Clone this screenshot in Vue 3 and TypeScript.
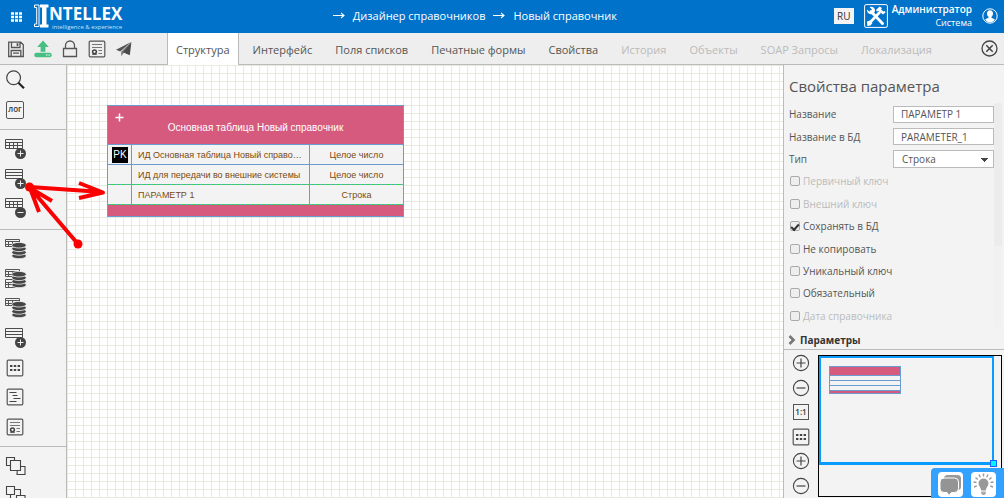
<script setup lang="ts">
import { ref } from 'vue'

interface Tab { title: string; disabled?: boolean }
interface Tool { icon: string; title: string }
interface Flag { id: string; label: string; checked: boolean; disabled?: boolean }

const crumbs = ['Дизайнер справочников', 'Новый справочник']

const actions: Tool[] = [
  { icon: 'save', title: 'Сохранить' },
  { icon: 'upload', title: 'Опубликовать' },
  { icon: 'lock', title: 'Заблокировать' },
  { icon: 'cert', title: 'Свойства' },
  { icon: 'plane', title: 'Отправить' },
]

const tabs: Tab[] = [
  { title: 'Структура' },
  { title: 'Интерфейс' },
  { title: 'Поля списков' },
  { title: 'Печатные формы' },
  { title: 'Свойства' },
  { title: 'История', disabled: true },
  { title: 'Объекты', disabled: true },
  { title: 'SOAP Запросы', disabled: true },
  { title: 'Локализация', disabled: true },
]
const activeTab = ref('Структура')

const tableTools: Tool[] = [
  { icon: 'table-add', title: 'Добавить таблицу' },
  { icon: 'row-add', title: 'Добавить параметр' },
  { icon: 'table-remove', title: 'Удалить' },
]
const dataTools: Tool[] = [
  { icon: 'db', title: 'Таблица БД' },
  { icon: 'db-double', title: 'Таблицы БД' },
  { icon: 'db', title: 'Представление БД' },
  { icon: 'row-add', title: 'Добавить строку' },
  { icon: 'dots', title: 'Сетка' },
  { icon: 'tree', title: 'Дерево' },
  { icon: 'cert', title: 'Сертификат' },
]
const orderTools: Tool[] = [
  { icon: 'front', title: 'На передний план' },
  { icon: 'back', title: 'На задний план' },
]
const isBoxed = (icon: string) => ['dots', 'tree', 'cert'].includes(icon)

const rows = [
  { pk: true, name: 'ИД Основная таблица Новый справо…', type: 'Целое число' },
  { pk: false, name: 'ИД для передачи во внешние системы', type: 'Целое число' },
  { pk: false, name: 'ПАРАМЕТР 1', type: 'Строка', selected: true },
]

const paramName = ref('ПАРАМЕТР 1')
const dbName = ref('PARAMETER_1')
const paramType = ref('Строка')

const flags = ref<Flag[]>([
  { id: 'primary', label: 'Первичный ключ', checked: false, disabled: true },
  { id: 'foreign', label: 'Внешний ключ', checked: false, disabled: true },
  { id: 'store', label: 'Сохранять в БД', checked: true },
  { id: 'nocopy', label: 'Не копировать', checked: false },
  { id: 'unique', label: 'Уникальный ключ', checked: false },
  { id: 'required', label: 'Обязательный', checked: false },
  { id: 'date', label: 'Дата справочника', checked: false, disabled: true },
])

const zoomTools: Tool[] = [
  { icon: 'plus', title: 'Увеличить' },
  { icon: 'minus', title: 'Уменьшить' },
  { icon: 'one', title: 'Масштаб 1:1' },
  { icon: 'dots', title: 'Сетка' },
  { icon: 'plus', title: 'Увеличить сетку' },
  { icon: 'minus', title: 'Уменьшить сетку' },
]
</script>

<template>
  <svg class="sprite" aria-hidden="true">
    <defs>
      <symbol id="i-save" viewBox="0 0 18 18">
        <path d="M1.700 2.200h12l2.600 2.600v11.700H1.700z M4.500 2.500v5h8.500v-5 M4.200 16v-5.500h9.600V16 M6 13.200h6" fill="none" stroke="#555" stroke-width="1.3" />
        <rect x="9.600" y="3.200" width="1.800" height="2.800" fill="#555" />
      </symbol>
      <symbol id="i-upload" viewBox="0 0 18 18">
        <path d="M9 .5l5.800 6.500h-3.400v4.800H6.600V7H3.200z" fill="#47bf83" />
        <rect x="0.3" y="12.800" width="17.400" height="4.400" rx="2" fill="#47bf83" />
        <circle cx="12.800" cy="15" r="0.7" fill="#fff" /><circle cx="15.200" cy="15" r="0.7" fill="#fff" />
      </symbol>
      <symbol id="i-lock" viewBox="0 0 18 18">
        <path d="M2.500 8.500h13v8h-13z M4.500 8.500V5.500a4.500 4.500 0 0 1 9 0v3" fill="none" stroke="#555" stroke-width="1.3" />
      </symbol>
      <symbol id="i-cert" viewBox="0 0 18 18">
        <rect x="1.200" y="1.200" width="15.600" height="15.600" rx="1" fill="none" stroke="#555" stroke-width="1.2" />
        <path d="M4 4.500h10M4 7.500h10M10.500 10.500h3.500M10.500 13.500h3.500" stroke="#777" stroke-width="1" />
        <circle cx="6.500" cy="11.800" r="1.900" fill="none" stroke="#444" stroke-width="1.5" />
        <path d="M4.200 14.400h4.600" stroke="#555" stroke-width="1" />
      </symbol>
      <symbol id="i-plane" viewBox="0 0 18 18">
        <path d="M16.200 2L1 9.800l4.200 1.600z" fill="#555" />
        <path d="M16.200 2L6.200 11.800v4.400l2.400-3.200z" fill="#777" />
        <path d="M16.400 2L8 12.200l6.800 3z" fill="#4a4a4a" />
      </symbol>
      <symbol id="i-search" viewBox="0 0 22 20">
        <circle cx="8.600" cy="7.800" r="6.900" fill="none" stroke="#444" stroke-width="1.2" />
        <path d="M13.400 12.800l5.600 5.400" stroke="#222" stroke-width="2.200" />
      </symbol>
      <symbol id="grid-table" viewBox="0 0 18 10">
        <path d="M.5 .5h17v9h-17z M.5 3.500h17M.5 6.500h17M4.500 3.500v6M8.500 3.500v6M12.500 3.500v6" fill="none" stroke="#4c4c4c" stroke-width="1" />
      </symbol>
      <symbol id="row-table" viewBox="0 0 18 10">
        <path d="M.5 .5h17v9h-17z M.5 3.500h17M.5 6.500h17" fill="none" stroke="#4c4c4c" stroke-width="1" />
      </symbol>
      <symbol id="stack" viewBox="0 0 15 17">
        <g fill="#454545" stroke="#f3f3f3" stroke-width=".8">
          <ellipse cx="7.500" cy="13.900" rx="7.300" ry="2.800" /><ellipse cx="7.500" cy="10.400" rx="7.300" ry="2.800" />
          <ellipse cx="7.500" cy="6.800" rx="7.300" ry="2.800" /><ellipse cx="7.500" cy="3.200" rx="7.300" ry="2.800" />
        </g>
      </symbol>
      <symbol id="i-table-add" viewBox="0 0 22 20">
        <use href="#grid-table" width="18" height="10" />
        <circle cx="15.500" cy="14.500" r="5.500" fill="#444" /><path d="M12.500 14.500h6M15.500 11.500v6" stroke="#eee" stroke-width="1" />
      </symbol>
      <symbol id="i-row-add" viewBox="0 0 22 20">
        <use href="#row-table" width="18" height="10" />
        <circle cx="15.500" cy="14.500" r="5.500" fill="#444" /><path d="M12.500 14.500h6M15.500 11.500v6" stroke="#eee" stroke-width="1" />
      </symbol>
      <symbol id="i-table-remove" viewBox="0 0 22 20">
        <use href="#grid-table" width="18" height="10" />
        <circle cx="15.500" cy="14.500" r="5.500" fill="#444" /><path d="M12.500 14.500h6" stroke="#eee" stroke-width="1" />
      </symbol>
      <symbol id="i-db" viewBox="0 0 22 20">
        <path d="M.5 .5h14v7h-14z M.5 2.500h14M.5 5.500h8M3.500 2.500v5M7.500 2.500v5" fill="none" stroke="#555" stroke-width="1" />
        <use href="#stack" x="6.500" y="3" width="15" height="17" />
      </symbol>
      <symbol id="i-db-double" viewBox="0 0 22 20">
        <path d="M.5 .5h14v7h-14z M.5 2.500h14M.5 5.500h8M3.500 2.500v5M7.500 2.500v5M.5 10.500h10v8H.5zM.5 13.500h8M.5 15.500h8M3.500 13.500v5" fill="none" stroke="#555" stroke-width="1" />
        <use href="#stack" x="6.500" y="2" width="15" height="17" />
      </symbol>
      <symbol id="i-dots" viewBox="0 0 18 18">
        <rect x="1.200" y="1.200" width="15.600" height="15.600" rx="1" fill="none" stroke="#555" stroke-width="1.2" />
        <path d="M4 7h2.400M7.800 7h2.400M11.600 7H14M4 11h2.400M7.800 11h2.400M11.600 11H14" stroke="#444" stroke-width="2.2" />
      </symbol>
      <symbol id="i-tree" viewBox="0 0 18 18">
        <rect x="1.200" y="1.200" width="15.600" height="15.600" rx="1" fill="none" stroke="#555" stroke-width="1.2" />
        <path d="M3.500 4.500h7M6.500 7.500h5M7.500 10.500h7M3.500 13.500h7" stroke="#444" stroke-width="1.1" />
      </symbol>
      <symbol id="i-front" viewBox="0 0 22 20">
        <path d="M1.500 1.500h8v8h-8z M12.500 10.500h7.500v8h-8z" fill="#f3f3f3" stroke="#444" stroke-width="1.1" />
        <path d="M5.500 4.500h10v10h-10z" fill="#f3f3f3" stroke="#444" stroke-width="1.1" />
      </symbol>
      <symbol id="i-back" viewBox="0 0 22 20">
        <path d="M5.500 4.500h10v10h-10z" fill="#f3f3f3" stroke="#444" stroke-width="1.1" />
        <path d="M1.500 1.500h8v8h-8z M11.500 10.500h8.500v8h-8.500z" fill="#f3f3f3" stroke="#444" stroke-width="1.1" />
      </symbol>
      <symbol id="i-plus" viewBox="0 0 18 18">
        <circle cx="9" cy="9" r="7.600" fill="none" stroke="#444" stroke-width="1.1" />
        <path d="M4.500 9h9M9 4.500v9" stroke="#444" stroke-width="1.2" />
      </symbol>
      <symbol id="i-minus" viewBox="0 0 18 18">
        <circle cx="9" cy="9" r="7.600" fill="none" stroke="#444" stroke-width="1.1" />
        <path d="M4.500 9h9" stroke="#444" stroke-width="1.2" />
      </symbol>
    </defs>
  </svg>

  <div class="app">
    <header class="header">
      <div class="brand">
        <button class="bare" aria-label="Меню">
          <svg width="11" height="10" viewBox="0 0 11 10">
            <path d="M0 1.500h3M4 1.500h3M8 1.500h3M0 5h3M4 5h3M8 5h3M0 8.500h3M4 8.500h3M8 8.500h3" stroke="#fff" stroke-width="2.600" />
          </svg>
        </button>
        <a class="logo" href="#">
          <svg width="15" height="24" viewBox="0 0 15 24">
            <path d="M.5 1h4.500v21.500H.5v-2.500h2.200V3.500H.5z" fill="none" stroke="#fff" stroke-width="1" />
            <path d="M6 .5h8.500v3h-2v17h2v3H6v-3h2v-17H6z" fill="#fff" />
          </svg>
          <span class="logo-text">
            <span class="logo-name">NTELLEX</span>
            <span class="logo-sub">intelligence &amp; experience</span>
          </span>
        </a>
      </div>
      <nav class="crumbs">
        <template v-for="c in crumbs" :key="c">
          <svg width="12" height="7" viewBox="0 0 12 7"><path d="M0 3.500h10.500M8 1l3 2.500L8 6" fill="none" stroke="#fff" stroke-width="1.1" /></svg>
          <a href="#">{{ c }}</a>
        </template>
      </nav>
      <div class="account">
        <button class="lang">RU</button>
        <button class="bare" aria-label="Настройки">
          <svg width="24" height="24" viewBox="0 0 24 24">
            <rect x=".6" y=".6" width="22.800" height="22.800" rx="1.500" fill="none" stroke="#fff" stroke-width="1" />
            <path d="M7 7.500L18.500 19.500" stroke="#fff" stroke-width="3" stroke-linecap="round" />
            <path d="M3 5.500l2.400 2.300 2-.4.500-2L5.600 3c2.200-.6 4.300.2 5.100 1.900.5 1.200.4 2.600-.4 3.700-1 1.400-3 2-4.600 1.300C3.800 9.200 2.700 7.500 3 5.500z" fill="#fff" />
            <path d="M4.500 20L16 8" stroke="#fff" stroke-width="2.600" />
            <path d="M12 6l3.500-3.500 2.500 1.500-1 1.500 2.500 2 1.500-.5.5 1.500-2.500 2-4.500-3.500-1.500.5z" fill="#fff" />
            <path d="M3 17.500l3-1 2.500 2.500-2 2.500-3.200.5z" fill="#fff" />
          </svg>
        </button>
        <div class="user"><b>Администратор</b><span>Система</span></div>
        <button class="bare" aria-label="Профиль">
          <svg width="16" height="16" viewBox="0 0 16 16">
            <circle cx="8" cy="8" r="7.200" fill="none" stroke="#fff" stroke-width="1" />
            <path d="M8 2.300c2 0 3 1.400 3 3.200 0 1.500-.7 2.600-1.500 3.300v1.300c1.500.4 2.700.8 3.300 1.600A6.500 6.500 0 0 1 8 14.500a6.500 6.500 0 0 1-4.800-2.800c.6-.8 1.800-1.200 3.300-1.600V8.800C5.700 8.100 5 7 5 5.500c0-1.800 1-3.200 3-3.200z" fill="#fff" />
          </svg>
        </button>
      </div>
    </header>

    <div class="toolbar">
      <div class="actions">
        <button v-for="a in actions" :key="a.icon" class="bare action" :aria-label="a.title">
          <svg width="18" height="18"><use :href="'#i-' + a.icon" /></svg>
        </button>
      </div>
      <div class="tabs" role="tablist">
        <button
          v-for="t in tabs" :key="t.title" class="tab" :class="{ active: t.title === activeTab }"
          role="tab" :aria-selected="t.title === activeTab" :disabled="t.disabled" @click="activeTab = t.title"
        >{{ t.title }}</button>
      </div>
      <button class="bare close" aria-label="Закрыть">
        <svg width="17" height="17" viewBox="0 0 17 17">
          <circle cx="8.500" cy="8.500" r="7.500" fill="none" stroke="#444" stroke-width="1.300" />
          <path d="M5.300 5.300l6.400 6.400M11.700 5.300l-6.400 6.400" stroke="#444" stroke-width="1.500" />
        </svg>
      </button>
    </div>

    <div class="body">
      <aside class="sidebar">
        <div class="group first">
          <button class="bare tool" aria-label="Поиск"><svg width="22" height="20"><use href="#i-search" /></svg></button>
          <button class="bare tool"><span class="log">лог</span></button>
        </div>
        <div class="group tables">
          <button v-for="t in tableTools" :key="t.title" class="bare tool" :aria-label="t.title">
            <svg width="22" height="20"><use :href="'#i-' + t.icon" /></svg>
          </button>
        </div>
        <div class="group data">
          <button v-for="t in dataTools" :key="t.title" class="bare tool" :aria-label="t.title">
            <svg :width="isBoxed(t.icon) ? 20 : 22" :height="isBoxed(t.icon) ? 18 : 20"><use :href="'#i-' + t.icon" /></svg>
          </button>
        </div>
        <div class="group order">
          <button v-for="t in orderTools" :key="t.title" class="bare tool" :aria-label="t.title">
            <svg width="22" height="20"><use :href="'#i-' + t.icon" /></svg>
          </button>
        </div>
      </aside>

      <main class="canvas">
        <table class="entity">
          <colgroup><col class="c-key" /><col /><col class="c-type" /></colgroup>
          <thead>
            <tr>
              <th colspan="3">
                <button class="bare add" aria-label="Добавить">
                  <svg width="9" height="9" viewBox="0 0 9 9"><path d="M4.500 .5v8M.5 4.500h8" stroke="#fff" stroke-width="1.500" /></svg>
                </button>
                <div class="entity-title">Основная таблица Новый справочник</div>
              </th>
            </tr>
          </thead>
          <tbody>
            <tr v-for="r in rows" :key="r.name" :class="{ selected: r.selected }">
              <td class="key"><span v-if="r.pk" class="pk">PK</span></td>
              <td class="name">{{ r.name }}</td>
              <td class="type">{{ r.type }}</td>
            </tr>
          </tbody>
          <tfoot><tr><td colspan="3"></td></tr></tfoot>
        </table>
      </main>

      <aside class="panel">
        <h2>Свойства параметра</h2>
        <div class="scroll">
          <form class="form" @submit.prevent>
            <div class="field"><label for="p-name">Название</label><input id="p-name" v-model="paramName" type="text" /></div>
            <div class="field"><label for="p-db">Название в БД</label><input id="p-db" v-model="dbName" type="text" /></div>
            <div class="field">
              <label for="p-type">Тип</label>
              <select id="p-type" v-model="paramType"><option>Строка</option><option>Целое число</option></select>
            </div>
            <div v-for="f in flags" :key="f.id" class="flag" :class="{ off: f.disabled }">
              <input :id="f.id" v-model="f.checked" type="checkbox" :disabled="f.disabled" />
              <label :for="f.id">{{ f.label }}</label>
            </div>
          </form>
          <div class="track"><div class="thumb"></div></div>
        </div>
        <button class="bare section">
          <svg width="8" height="10" viewBox="0 0 8 10"><path d="M1.500 1l4 4-4 4" fill="none" stroke="#777" stroke-width="2.600" /></svg>
          Параметры
        </button>
        <div class="overview">
          <div class="zooms">
            <button v-for="z in zoomTools" :key="z.title" class="bare zoom" :aria-label="z.title">
              <span v-if="z.icon === 'one'" class="one">1:1</span>
              <svg v-else width="18" height="18"><use :href="'#i-' + z.icon" /></svg>
            </button>
          </div>
          <div class="minimap">
            <div class="viewport">
              <div class="mini"><i></i><i></i><i></i></div>
              <div class="handle"></div>
            </div>
          </div>
        </div>
      </aside>
    </div>

    <svg class="arrows" width="120" height="260" viewBox="0 0 120 260" aria-hidden="true">
      <g fill="none" stroke="#fb0000" stroke-width="4" stroke-linejoin="round">
        <path d="M30 187L102 192M79 183L103 192.500L79 198" />
        <path d="M78 244L31 189M39 212L30 188L52 201" />
      </g>
      <circle cx="29.500" cy="187" r="4.500" fill="#fb0000" />
      <circle cx="78" cy="244" r="4.500" fill="#fb0000" />
    </svg>

    <div class="helpers">
      <button class="helper" aria-label="Сообщения">
        <svg width="25" height="25" viewBox="0 0 25 25">
          <rect x="6" y="3" width="17" height="15" rx="3.500" fill="#999" />
          <path d="M6 6h10.500a4 4 0 0 1 4 4v6.500a4 4 0 0 1-4 4h-3l-2.500 3-2-3H6a4 4 0 0 1-4-4V10a4 4 0 0 1 4-4z" fill="#949494" stroke="#fff" stroke-width="1" />
        </svg>
      </button>
      <button class="helper" aria-label="Подсказки">
        <svg width="25" height="25" viewBox="0 0 25 25">
          <path d="M12.500 6.500a5 5 0 0 1 5 5c0 2.500-2.500 4-2.700 7h-4.600c-.2-3-2.700-4.500-2.700-7a5 5 0 0 1 5-5z" fill="#999" />
          <path d="M10.200 19.500h4.600v2l-1.300 1.500h-2l-1.300-1.500z" fill="#aaa" />
          <path d="M12.500 1.500v3M8 2.500l1.300 2.700M17 2.500l-1.300 2.700M4.500 5.500l2.300 2M20.500 5.500l-2.300 2M2.500 10l3 .5M22.500 10l-3 .5M3 15l2.700-1M22 15l-2.700-1" stroke="#999" stroke-width="1.400" />
        </svg>
      </button>
    </div>
  </div>
</template>

<style>
html, body { margin: 0; }
</style>

<style scoped>
.sprite { position: absolute; width: 0; height: 0; }
.app {
  position: relative; display: flex; flex-direction: column; height: 100vh; overflow: hidden;
  font-family: "Open Sans", "Noto Sans", sans-serif; font-size: 10px; color: #555; background: #f3f3f3;
}
.app * { box-sizing: border-box; }
button, input, select { font: inherit; color: inherit; margin: 0; border-radius: 0; }
.bare { display: flex; align-items: center; padding: 0; border: 0; background: none; }
svg { display: block; flex: none; }

.header { display: flex; flex: none; height: 33px; background: #0072ca; color: #fff; }
.brand { display: flex; flex: none; align-items: center; gap: 12px; width: 130px; padding-left: 11px; }
.logo { display: flex; align-items: flex-start; color: #fff; text-decoration: none; }
.logo-text { display: flex; flex-direction: column; }
.logo-name { font-size: 17px; line-height: 20px; font-weight: 700; }
.logo-sub { font-size: 6px; line-height: 6px; padding-left: 3px; white-space: nowrap; color: #cfe3f5; }
.crumbs { flex: 1; display: flex; align-items: center; justify-content: center; gap: 8px; padding: 0 1px 2px 0; }
.crumbs a { color: #fff; font-size: 11px; text-decoration: none; white-space: nowrap; }
.account { display: flex; flex: none; align-items: center; gap: 10px; padding: 0 6px 2px 13px; }
.lang { width: 20px; height: 16px; padding: 0; border: 0; background: #f3f3f3; color: #333; font-size: 10px; line-height: 14px; }
.user { display: flex; flex-direction: column; text-align: right; font-size: 9px; line-height: 13px; margin-left: -6px; }
.user b { font-size: 10px; font-weight: 600; }

.toolbar { display: flex; flex: none; height: 32px; background: #eee; border-bottom: 1px solid #bbb; }
.actions { display: flex; flex: none; align-items: center; width: 167px; padding-left: 2px; }
.action { width: 27px; justify-content: center; }
.tabs { flex: 1; display: flex; gap: 5px; }
.tab {
  height: 32px; padding: 0 8px; border: 1px solid transparent; border-width: 0 1px; background: none;
  font-size: 11px; color: #555; white-space: nowrap;
}
.tab.active { background: #fff; border-color: #bbb; }
.tab:disabled { color: #bbb; }
.close { padding-right: 6px; }

.body { flex: 1; min-height: 0; display: flex; }
.sidebar { width: 67px; flex: none; border-right: 1px solid #bbb; overflow: hidden; }
.group { display: flex; flex-direction: column; border-bottom: 1px solid #bbb; padding: 4px 0; }
.first { height: 65px; padding-top: 0; }
.tables { height: 100px; padding-bottom: 6px; }
.data { height: 217px; }
.order { height: 68px; }
.tool { flex: 1; padding-left: 5px; }
.log {
  width: 18px; height: 18px; margin-left: 1px; border: 1px solid #555; border-radius: 2px;
  font-size: 8px; line-height: 14px; font-weight: 600; text-align: center; color: #333;
}

.canvas {
  position: relative; flex: 1; min-width: 0; overflow: hidden; background-color: #fff;
  background-image: linear-gradient(to right, #e9e9e1 1px, transparent 1px), linear-gradient(to bottom, #e9e9e1 1px, transparent 1px);
  background-size: 8px 8px;
}
.entity {
  position: absolute; left: 40px; top: 40px; width: 297px; table-layout: fixed; border-collapse: collapse;
  font-family: "Liberation Sans", Arial, sans-serif; font-size: 9px; color: #7a4a10; background: #f3f3f3;
  border: 1px solid #6a9bd1;
}
.c-key { width: 24px; }
.c-type { width: 94px; }
.entity th, .entity td { padding: 0; border: 1px solid #6a9bd1; font-weight: 400; }
.entity th { height: 39px; background: #d65a7e; color: #fff; vertical-align: top; }
.add { padding: 7px 0 1px 7px; }
.entity-title { font-size: 10px; line-height: 10px; }
.entity tbody td { height: 20px; line-height: 12px; }
.entity .name { padding: 0 4px 0 6px; overflow: hidden; text-overflow: ellipsis; white-space: nowrap; }
.entity .type { text-align: center; }
.pk { display: block; width: 16px; height: 16px; margin-left: 4px; background: #000; color: #fff; font-size: 10px; line-height: 16px; text-align: center; }
.selected { position: relative; }
.selected .key::after { content: ""; position: absolute; inset: -1px 0 0 -1px; border: 1px dashed #2bdc4b; pointer-events: none; }
.entity tfoot td { height: 12px; background: #d65a7e; }

.panel { width: 221px; flex: none; display: flex; flex-direction: column; border-left: 1px solid #bbb; }
h2 { margin: 0; padding: 10px 5px 6px; font-size: 15px; line-height: 22px; font-weight: 400; }
.scroll { display: flex; justify-content: space-between; flex: none; height: 224px; padding: 0 2px 0 5px; }
.form { display: grid; grid-template-rows: repeat(10, 1fr); width: 205px; }
.field, .flag { display: flex; align-items: center; }
.field label { width: 104px; }
.field input, .field select { width: 101px; height: 17px; padding: 0 7px; border: 1px solid #bbb; background: #fff; font-size: 10px; }
.field select {
  height: 18px; appearance: none; padding: 0 8px;
  background: linear-gradient(to bottom right, #444 50%, transparent 50%) 91px 7px / 4px 4px no-repeat,
    linear-gradient(to bottom left, #444 50%, transparent 50%) 87px 7px / 4px 4px no-repeat, #fff;
}
.flag { gap: 3px; padding-left: 1px; }
.flag input {
  appearance: none; display: grid; place-items: center; width: 10px; height: 10px; border: 1px solid #aaa; border-radius: 2px;
  background: #eee;
}
.flag input:checked::before {
  content: ""; width: 6px; height: 3px; border: solid #333; border-width: 0 0 2px 2px; transform: rotate(-48deg);
}
.off { color: #bbb; }
.track { width: 8px; background: #f1f1f1; }
.thumb { height: 143px; background: #ececec; }
.section { height: 23px; gap: 4px; padding: 4px 4px 0; border-bottom: 1px solid #bbb; font-size: 10px; font-weight: 700; color: #333; }
.overview { flex: 1; display: flex; padding: 0 2px 0 0; }
.zooms { width: 34px; display: flex; flex-direction: column; padding-top: 1px; }
.zoom { flex: 1; justify-content: center; }
.one { width: 16px; height: 16px; border: 1px solid #555; font-size: 8px; line-height: 13px; font-weight: 600; text-align: center; color: #333; }
.minimap { flex: 1; margin: 5px 0 1px; border: 1px solid #000; }
.viewport { position: relative; width: 175px; height: 109px; border: 2px solid #0a9bff; border-bottom-width: 3px; padding: 8px; }
.mini {
  display: flex; flex-direction: column; width: 72px; height: 28px; padding-top: 8px;
  border: 1px solid #6a9bd1; background: #d65a7e;
}
.mini i { flex: 1; border-top: 1px solid #6a9bd1; background: #f3f3f3; }
.mini i:last-child { border-bottom: 1px solid #6a9bd1; margin-bottom: 2px; }
.handle { position: absolute; right: -5px; bottom: -5px; width: 7px; height: 7px; background: #00f6ff; border: 1px solid #1a5fff; }

.arrows { position: absolute; left: 0; top: 0; pointer-events: none; }
.helpers {
  position: absolute; right: 0; bottom: 0; display: flex; gap: 8px; padding: 4px 8px 1px 7px;
  background: #33a1ff; border-radius: 4px 0 0 0;
}
.helper { width: 25px; height: 25px; padding: 0; border: 0; border-radius: 4px; background: #fff; }
</style>
